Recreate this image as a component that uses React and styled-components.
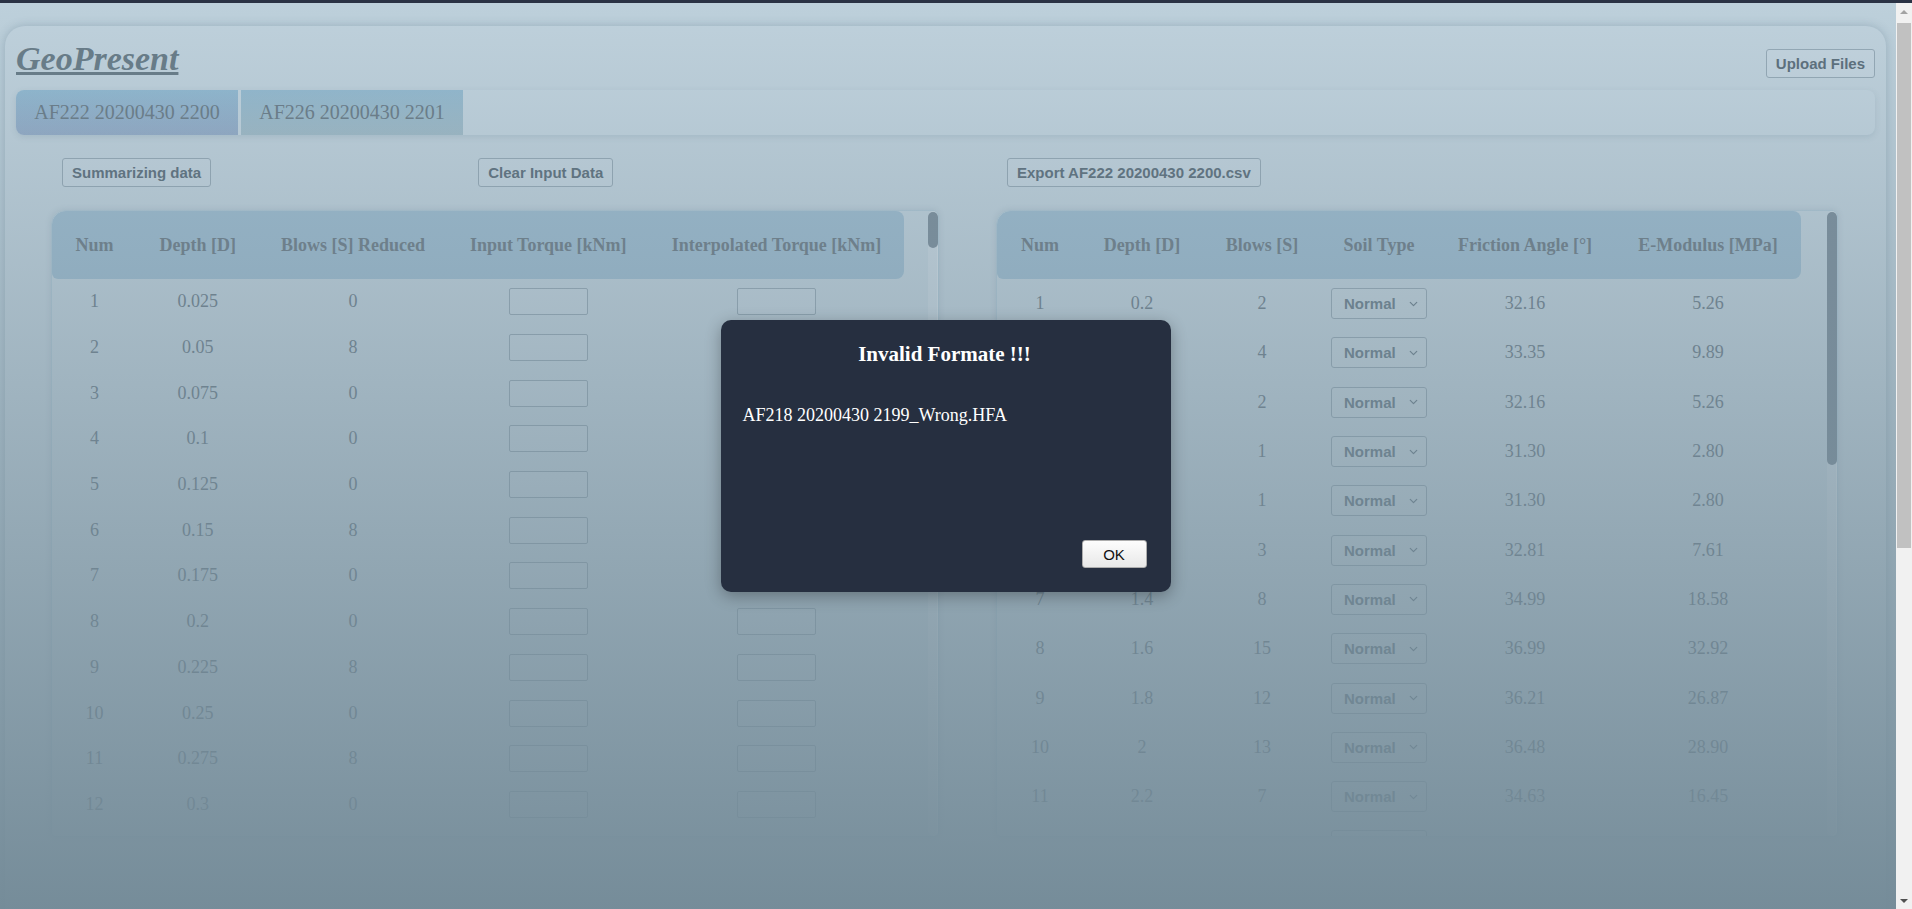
import React from 'react';
import styled, { createGlobalStyle } from 'styled-components';
import { ChevronDown } from 'lucide-react';

const SERIF = '"Liberation Serif", "Times New Roman", serif';
const SANS = '"Liberation Sans", Arial, sans-serif';

const FRAME_HEIGHT = 625;
const HEAD_HEIGHT = 68;
const VISIBLE_ROWS = 13;

const leftBlows = [0, 8, 0, 0, 0, 8, 0, 0, 8, 0, 8, 0];
const leftRows = Array.from({ length: 236 }, (_, i) => ({
  num: i + 1,
  depth: String(+((i + 1) * 0.025).toFixed(3)),
  blows: i < 12 ? leftBlows[i] : [0, 8, 0, 8, 0, 0, 8][i % 7],
}));

const friction = { 1: '31.30', 2: '32.16', 3: '32.81', 4: '33.35', 7: '34.63', 8: '34.99', 12: '36.21', 13: '36.48', 15: '36.99' };
const modulus = { 1: '2.80', 2: '5.26', 3: '7.61', 4: '9.89', 7: '16.45', 8: '18.58', 12: '26.87', 13: '28.90', 15: '32.92' };
const rightBlows = [2, 4, 2, 1, 1, 3, 8, 15, 12, 13, 7, 13, 15, 12, 8, 13, 15, 12, 7, 8, 13, 12, 15, 13, 8, 12, 15, 13, 12, 15];
const rightRows = rightBlows.map((b, i) => ({
  num: i + 1,
  depth: String(+((i + 1) * 0.2).toFixed(1)),
  blows: b,
  friction: friction[b],
  modulus: modulus[b],
}));

// thumb length like a real scroll bar: visible part / whole list
const thumbFor = (rows, rowHeight) =>
  Math.max(20, (FRAME_HEIGHT * FRAME_HEIGHT) / (rows * rowHeight + HEAD_HEIGHT));

const GlobalStyle = createGlobalStyle`
  html, body {
    margin: 0;
    padding: 0;
    height: 100%;
    overflow: hidden;
  }
  body {
    font-family: ${SERIF};
  }
  #root {
    height: 100%;
  }
`;

const Page = styled.div`
  display: flex;
  flex-direction: column;
  height: 100vh;
`;

const TopStrip = styled.div`
  height: 3px;
  flex-shrink: 0;
  background: #2a3244;
`;

const Viewport = styled.div`
  flex: 1;
  min-height: 0;
  display: flex;
`;

const Main = styled.main`
  flex: 1;
  position: relative;
  overflow: hidden;
  background: #bdd0db;
`;

const Card = styled.section`
  margin: 23px 10px 0 5px;
  padding: 13px 11px 0;
  min-height: 1000px;
  background: #bfd1dc;
  border-radius: 20px 20px 0 0;
  box-shadow: 0 0 10px rgba(60, 90, 110, 0.28);
`;

const HeaderRow = styled.header`
  display: flex;
  justify-content: space-between;
  align-items: flex-start;
  height: 51px;
`;

const Title = styled.h1`
  margin: 0;
  font: italic bold 34px/40px ${SERIF};
  color: #677b87;
  text-decoration: underline;
`;

const ActionButton = styled.button`
  height: 29px;
  padding: 0 9px;
  border: 1px solid #94a8b5;
  border-radius: 3px;
  background: rgba(255, 255, 255, 0.06);
  font: bold 15px ${SANS};
  color: #5b6e7b;
  white-space: nowrap;
  cursor: pointer;
`;

const UploadButton = styled(ActionButton)`
  margin-top: 10px;
`;

const TabBar = styled.nav`
  display: flex;
  gap: 3px;
  height: 45px;
  border-radius: 8px;
  background: #c1d3de;
  box-shadow: 0 2px 6px rgba(70, 100, 120, 0.15);
`;

const Tab = styled.div`
  width: 222px;
  display: flex;
  align-items: center;
  justify-content: center;
  font: 20px ${SERIF};
  color: #697b87;
  border-radius: ${(p) => (p.$first ? '8px 0 0 8px' : '0')};
  background: ${(p) =>
    p.$active
      ? 'linear-gradient(#90b8d0, #92aac6)'
      : 'linear-gradient(#93b9cf, #9eb9c6)'};
`;

const Workspace = styled.div`
  display: grid;
  grid-template-columns: 888px 842px;
  column-gap: 57px;
  padding-left: 35px;
  margin-top: 23px;
`;

const Column = styled.div`
  display: flex;
  flex-direction: column;
  gap: 23px;
`;

const Toolbar = styled.div`
  display: flex;
  gap: ${(p) => p.$gap || 0}px;
  padding-left: 11px;
  height: 29px;
`;

const TableFrame = styled.div`
  display: flex;
  height: ${FRAME_HEIGHT + 2}px;
  box-sizing: border-box;
  border: 1px solid rgba(172, 197, 211, 0.95);
  border-radius: 14px 6px 4px 4px;
  overflow: hidden;
  box-shadow: 0 0 6px rgba(60, 90, 110, 0.15);
`;

const TableScroller = styled.div`
  flex: 1;
  min-width: 0;
  overflow: hidden;
`;

const ScrollRail = styled.div`
  width: 10px;
  flex-shrink: 0;
  border-radius: 5px;
  background: rgba(255, 255, 255, 0.14);
  box-shadow: inset -1px 0 0 rgba(255, 255, 255, 0.2);
`;

const RailThumb = styled.div`
  height: ${(p) => p.$size}px;
  margin-top: 1px;
  border-radius: 5px;
  background: #7a8d9b;
`;

const DataTable = styled.table`
  border-collapse: separate;
  border-spacing: 0;
  table-layout: fixed;
  width: ${(p) => p.$width}px;
`;

const Th = styled.th`
  height: ${HEAD_HEIGHT}px;
  padding: 0;
  background: #9cbbcf;
  color: #6c7c87;
  font: bold 18px ${SERIF};
  text-align: center;
  white-space: nowrap;

  &:first-child {
    border-radius: 14px 0 0 6px;
  }
  &:last-child {
    border-radius: 0 8px 8px 0;
  }
`;

const Td = styled.td`
  height: ${(p) => p.$rowHeight}px;
  padding: 0;
  text-align: center;
  vertical-align: middle;
  font: 18px ${SERIF};
  color: #6c7e8b;
`;

const TorqueInput = styled.input`
  display: block;
  margin: 0 auto;
  width: 79px;
  height: 27px;
  box-sizing: border-box;
  border: 1px solid #93a7b4;
  border-radius: 2px;
  background: rgba(255, 255, 255, 0.06);
`;

const SelectWrap = styled.div`
  position: relative;
  display: inline-block;
  vertical-align: middle;
  color: #687c89;

  svg {
    position: absolute;
    right: 7px;
    top: 50%;
    transform: translateY(-50%);
    pointer-events: none;
  }
`;

const SoilSelect = styled.select`
  appearance: none;
  width: 96px;
  height: 31px;
  box-sizing: border-box;
  padding: 0 0 0 12px;
  border: 1px solid #94a8b5;
  border-radius: 3px;
  background: rgba(255, 255, 255, 0.05);
  font: bold 15px ${SANS};
  color: #687c89;
`;

const Backdrop = styled.div`
  position: absolute;
  inset: 0;
  padding-right: 5px;
  display: flex;
  align-items: center;
  justify-content: center;
  background: linear-gradient(to bottom, rgba(115, 138, 151, 0), rgba(115, 138, 151, 0.97));
`;

const Dialog = styled.div`
  width: 450px;
  height: 272px;
  box-sizing: border-box;
  padding: 22px 24px 24px 22px;
  display: flex;
  flex-direction: column;
  background: #262f40;
  border-radius: 10px;
  color: #fff;
  box-shadow: 0 4px 16px rgba(0, 0, 0, 0.3);
`;

const DialogTitle = styled.h3`
  margin: 0;
  font: bold 21px/24px ${SERIF};
  text-align: center;
`;

const DialogText = styled.p`
  margin: 38px 0 0;
  font: 18px/22px ${SERIF};
`;

const DialogFooter = styled.div`
  margin-top: auto;
  display: flex;
  justify-content: flex-end;
`;

const OkButton = styled.button`
  width: 65px;
  height: 28px;
  border: 1px solid #adadad;
  border-radius: 3px;
  background: linear-gradient(#fdfdfd, #e8e8e8);
  font: 15px ${SANS};
  color: #111;
`;

const PageScrollbar = styled.div`
  width: 16px;
  flex-shrink: 0;
  display: flex;
  flex-direction: column;
  background: #f1f1f1;
`;

const ScrollArrow = styled.div`
  height: 17px;
  display: flex;
  align-items: center;
  justify-content: center;

  &::after {
    content: '';
    border-left: 4px solid transparent;
    border-right: 4px solid transparent;
    ${(p) =>
      p.$dir === 'up'
        ? `border-bottom: 4px solid ${p.$color};`
        : `border-top: 4px solid ${p.$color};`}
  }
`;

const ScrollThumb = styled.div`
  height: 525px;
  margin: 3px 1px 0;
  background: #c1c1c1;
`;

const ScrollSpacer = styled.div`
  flex: 1;
`;

const Colgroup = ({ widths }) => (
  <colgroup>
    {widths.map((w, i) => (
      <col key={i} style={{ width: w }} />
    ))}
  </colgroup>
);

const leftCols = [85, 121.5, 189, 201.5, 255];
const rightCols = [86, 118, 122, 112, 180, 186];

// only the rows inside the frame are rendered; the rail shows the full length
const TorqueTable = () => (
  <TableFrame>
    <TableScroller>
      <DataTable $width={852}>
        <Colgroup widths={leftCols} />
        <thead>
          <tr>
            <Th>Num</Th>
            <Th>Depth [D]</Th>
            <Th>Blows [S] Reduced</Th>
            <Th>Input Torque [kNm]</Th>
            <Th>Interpolated Torque [kNm]</Th>
          </tr>
        </thead>
        <tbody>
          {leftRows.slice(0, VISIBLE_ROWS).map((r) => (
            <tr key={r.num}>
              <Td $rowHeight={45.7}>{r.num}</Td>
              <Td $rowHeight={45.7}>{r.depth}</Td>
              <Td $rowHeight={45.7}>{r.blows}</Td>
              <Td $rowHeight={45.7}>
                <TorqueInput type="text" />
              </Td>
              <Td $rowHeight={45.7}>
                <TorqueInput type="text" />
              </Td>
            </tr>
          ))}
        </tbody>
      </DataTable>
    </TableScroller>
    <ScrollRail>
      <RailThumb $size={thumbFor(leftRows.length, 45.7)} />
    </ScrollRail>
  </TableFrame>
);

const SoilTable = () => (
  <TableFrame>
    <TableScroller>
      <DataTable $width={804}>
        <Colgroup widths={rightCols} />
        <thead>
          <tr>
            <Th>Num</Th>
            <Th>Depth [D]</Th>
            <Th>Blows [S]</Th>
            <Th>Soil Type</Th>
            <Th>Friction Angle [°]</Th>
            <Th>E-Modulus [MPa]</Th>
          </tr>
        </thead>
        <tbody>
          {rightRows.slice(0, VISIBLE_ROWS).map((r) => (
            <tr key={r.num}>
              <Td $rowHeight={49.3}>{r.num}</Td>
              <Td $rowHeight={49.3}>{r.depth}</Td>
              <Td $rowHeight={49.3}>{r.blows}</Td>
              <Td $rowHeight={49.3}>
                <SelectWrap>
                  <SoilSelect defaultValue="Normal">
                    <option>Normal</option>
                    <option>Loose</option>
                    <option>Dense</option>
                  </SoilSelect>
                  <ChevronDown size={13} strokeWidth={2.2} />
                </SelectWrap>
              </Td>
              <Td $rowHeight={49.3}>{r.friction}</Td>
              <Td $rowHeight={49.3}>{r.modulus}</Td>
            </tr>
          ))}
        </tbody>
      </DataTable>
    </TableScroller>
    <ScrollRail>
      <RailThumb $size={thumbFor(rightRows.length, 49.3)} />
    </ScrollRail>
  </TableFrame>
);

const App = () => {
  return (
    <Page>
      <GlobalStyle />
      <TopStrip />
      <Viewport>
        <Main>
          <Card>
            <HeaderRow>
              <Title>GeoPresent</Title>
              <UploadButton>Upload Files</UploadButton>
            </HeaderRow>
            <TabBar>
              <Tab $active $first>AF222 20200430 2200</Tab>
              <Tab>AF226 20200430 2201</Tab>
            </TabBar>
            <Workspace>
              <Column>
                <Toolbar $gap={267}>
                  <ActionButton>Summarizing data</ActionButton>
                  <ActionButton>Clear Input Data</ActionButton>
                </Toolbar>
                <TorqueTable />
              </Column>
              <Column>
                <Toolbar>
                  <ActionButton>Export AF222 20200430 2200.csv</ActionButton>
                </Toolbar>
                <SoilTable />
              </Column>
            </Workspace>
          </Card>
          <Backdrop>
            <Dialog>
              <DialogTitle>Invalid Formate !!!</DialogTitle>
              <DialogText>AF218 20200430 2199_Wrong.HFA</DialogText>
              <DialogFooter>
                <OkButton>OK</OkButton>
              </DialogFooter>
            </Dialog>
          </Backdrop>
        </Main>
        <PageScrollbar>
          <ScrollArrow $dir="up" $color="#a3a3a3" />
          <ScrollThumb />
          <ScrollSpacer />
          <ScrollArrow $dir="down" $color="#505050" />
        </PageScrollbar>
      </Viewport>
    </Page>
  );
};

export default App;
